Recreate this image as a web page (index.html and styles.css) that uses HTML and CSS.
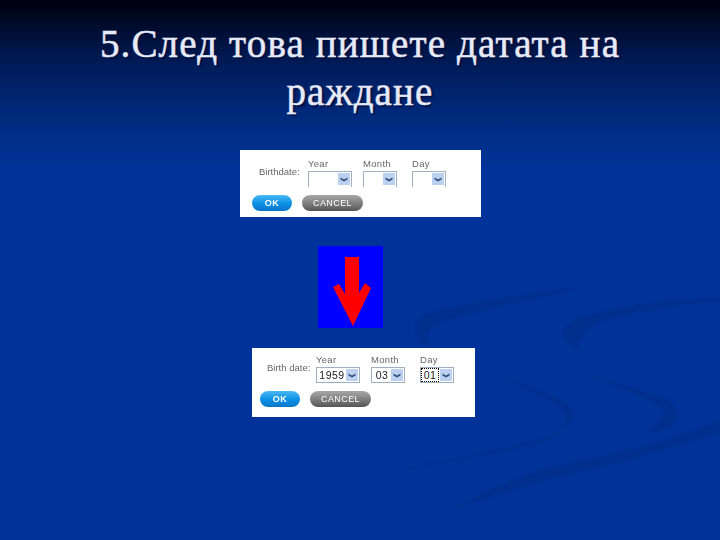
FILE: index.html
```html
<!DOCTYPE html>
<html lang="bg">
<head>
<meta charset="utf-8">
<title>Дата на раждане</title>
<link rel="stylesheet" href="styles.css">
</head>
<body>
<main class="slide">
  <svg class="swooshes" viewBox="0 0 720 540" aria-hidden="true">
    <path d="M573 287C530 295 470 300 427 313C412 319 410 335 427 347C425 337 430 328 440 323C470 312 530 300 573 290Z"/>
    <path d="M720 297C680 298 620 305 580 317C555 327 560 342 580 350C576 340 585 330 600 323C630 312 680 304 720 302Z"/>
    <path d="M480 370C510 380 545 390 565 402C578 412 573 425 557 433C530 445 440 462 373 473C440 465 510 452 547 440C566 432 572 418 560 407C540 394 510 382 480 370Z"/>
    <path d="M560 367C600 378 645 390 668 400C680 408 680 425 663 430C655 433 648 434 640 435C652 430 665 420 663 410C655 400 610 383 560 367Z"/>
    <path d="M720 420C695 430 665 440 640 447C600 457 565 463 540 470C510 480 480 493 453 510C480 500 510 490 547 480C580 472 610 465 640 457C665 450 695 440 720 433Z"/>
  </svg>
  <h1 class="title">5.След това пишете датата на раждане</h1>

  <section class="panel panel-a">
    <div class="form-row">
      <span class="label">Birthdate:</span>
      <div class="field year"><span class="caption">Year</span><div class="select open"><span class="value"></span><span class="drop"><svg viewBox="0 0 12 12"><path d="M2.5 4.5 6 6.5 9.5 4.5 9.5 6.5 6 8.5 2.5 6.5Z"/></svg></span></div></div>
      <div class="field month"><span class="caption">Month</span><div class="select open"><span class="value"></span><span class="drop"><svg viewBox="0 0 12 12"><path d="M2.5 4.5 6 6.5 9.5 4.5 9.5 6.5 6 8.5 2.5 6.5Z"/></svg></span></div></div>
      <div class="field day"><span class="caption">Day</span><div class="select open"><span class="value"></span><span class="drop"><svg viewBox="0 0 12 12"><path d="M2.5 4.5 6 6.5 9.5 4.5 9.5 6.5 6 8.5 2.5 6.5Z"/></svg></span></div></div>
    </div>
    <div class="buttons">
      <span class="btn ok">OK</span>
      <span class="btn cancel">CANCEL</span>
    </div>
  </section>

  <div class="arrow-box">
    <svg viewBox="0 0 65 82" aria-hidden="true"><path d="M27 11H41V47L47 37 53 42 35 80 15 41 21 38 27 48Z"/></svg>
  </div>

  <section class="panel panel-b">
    <div class="form-row">
      <span class="label">Birth date:</span>
      <div class="field year"><span class="caption">Year</span><div class="select"><span class="value">1959</span><span class="drop"><svg viewBox="0 0 12 12"><path d="M2.5 4.5 6 6.5 9.5 4.5 9.5 6.5 6 8.5 2.5 6.5Z"/></svg></span></div></div>
      <div class="field month"><span class="caption">Month</span><div class="select"><span class="value">03</span><span class="drop"><svg viewBox="0 0 12 12"><path d="M2.5 4.5 6 6.5 9.5 4.5 9.5 6.5 6 8.5 2.5 6.5Z"/></svg></span></div></div>
      <div class="field day"><span class="caption">Day</span><div class="select"><span class="value focus">01</span><span class="drop"><svg viewBox="0 0 12 12"><path d="M2.5 4.5 6 6.5 9.5 4.5 9.5 6.5 6 8.5 2.5 6.5Z"/></svg></span></div></div>
    </div>
    <div class="buttons">
      <span class="btn ok">OK</span>
      <span class="btn cancel">CANCEL</span>
    </div>
  </section>
</main>
</body>
</html>
```
FILE: styles.css
```css
* { box-sizing: border-box; }
html, body { margin: 0; padding: 0; }
body { width: 720px; height: 540px; overflow: hidden; }

.slide {
  position: relative;
  width: 720px;
  height: 540px;
  overflow: hidden;
  display: flex;
  flex-direction: column;
  align-items: flex-start;
  background: linear-gradient(180deg, #00000f 0, #001a55 60px, #002a7c 115px, #003399 170px, #003399 100%);
  font-family: "Liberation Sans", Arial, sans-serif;
}
.swooshes { position: absolute; left: 0; top: 0; width: 720px; height: 540px; filter: blur(1px); }
.swooshes path { fill: #002f8e; }

.title {
  position: relative;
  width: 600px;
  margin: 20px 0 0 60px;
  height: 130px;
  font-family: "Liberation Serif", "Times New Roman", serif;
  font-size: 39px;
  font-weight: 400;
  letter-spacing: 1.15px;
  line-height: 48px;
  text-align: center;
  color: #e8eaf8;
  -webkit-text-stroke: .5px #e8eaf8;
  text-shadow: 2px 2px 2px #001040;
}

.panel { position: relative; background: #fff; color: #666; }
.panel-a { width: 241px; height: 67px; margin-left: 240px; padding: 7px 0 0 19px; }
.panel-b { width: 223px; height: 69px; margin-left: 252px; margin-top: 20px; padding: 5px 0 0 15px; }

.form-row { display: flex; align-items: flex-start; }
.label, .caption, .value, .btn { filter: blur(.45px); }
.label { width: 49px; margin-top: 9px; font-size: 9.5px; line-height: 12px; white-space: nowrap; }

.field { display: flex; flex-direction: column; }
.field.year { width: 44px; margin-right: 11px; }
.field.month { width: 34px; margin-right: 15px; }
.field.day { width: 34px; }
.caption { font-size: 9.5px; line-height: 14px; height: 14px; letter-spacing: .3px; }

.select {
  display: flex;
  align-items: center;
  justify-content: space-between;
  height: 16px;
  border: 1px solid #9fb0c0;
  padding: 1px;
  background: #fff;
}
.select.open { border-bottom: 0; align-items: flex-start; }
.value {
  flex: 1;
  font-size: 10.5px;
  line-height: 12px;
  color: #222;
  text-align: center;
  letter-spacing: .5px;
}
.value.focus { outline: 1px dotted #000; margin-right: 2px; filter: none; }
.drop {
  width: 12px;
  height: 12px;
  background: #bcd0f0;
  display: block;
  flex: none;
}
.drop svg { display: block; width: 12px; height: 12px; }
.drop path { fill: #35507f; }

.buttons { display: flex; gap: 10px; margin: 8px 0 0 -7px; }
.btn {
  display: block;
  height: 16px;
  border-radius: 8px;
  font-size: 9px;
  line-height: 16px;
  text-align: center;
  color: #fff;
  letter-spacing: .4px;
}
.ok { width: 40px; background: linear-gradient(180deg, #4cb8f4 0, #0a8fe6 55%, #0a75c8 100%); font-weight: 700; }
.cancel { width: 61px; background: linear-gradient(180deg, #a8a8a8 0, #808080 50%, #555 100%); }

.arrow-box {
  position: relative;
  width: 65px;
  height: 82px;
  margin: 29px 0 0 318px;
  background: #0000ff;
}
.arrow-box svg { display: block; width: 65px; height: 82px; }
.arrow-box path { fill: #ff0000; }
```
